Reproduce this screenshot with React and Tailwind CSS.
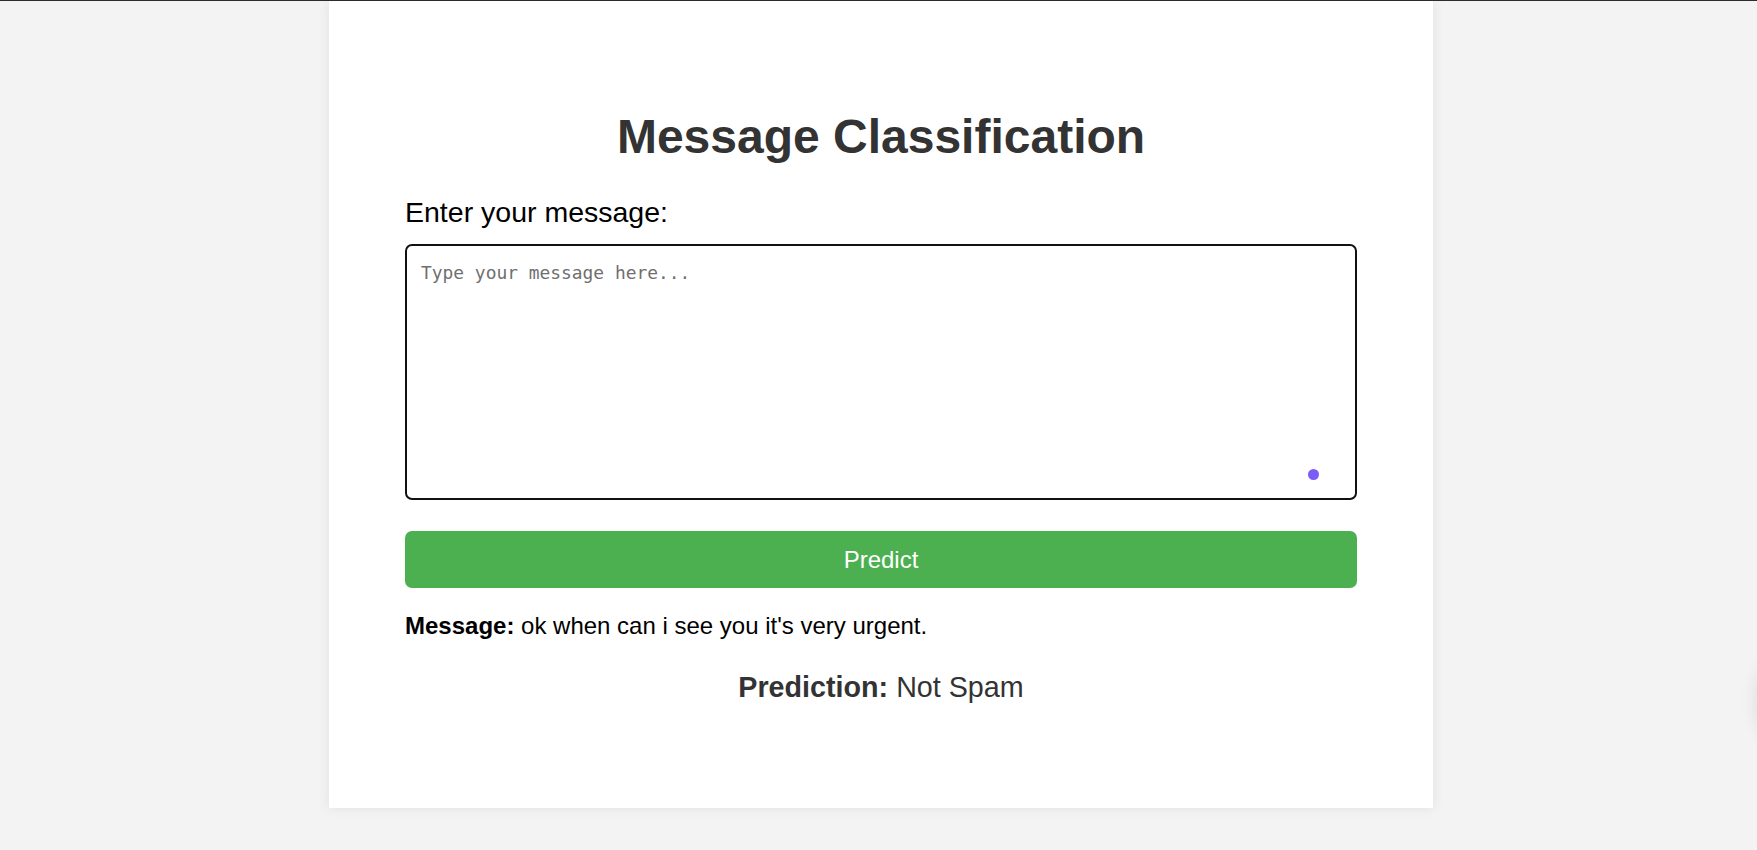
import React, { useState } from "react";

const SANS = "font-['Liberation_Sans',Arial,sans-serif]";

// Single card page: a text box, a predict button and the last result.
export default function App() {
  const [text, setText] = useState("");
  const result = {
    message: "ok when can i see you it's very urgent.",
    label: "Not Spam",
  };

  return (
    <div className={`relative min-h-[850px] overflow-hidden border-t border-[#2b2b2b] bg-[#f3f3f3] pl-[5px] ${SANS}`}>
      <div className="mx-auto w-[1104px] bg-white px-[76px] pt-[108px] pb-[104px] shadow-[0_0_12px_rgba(0,0,0,0.08)]">
        <h1 className="text-center text-[48px] leading-[56px] font-bold text-[#333]">
          Message Classification
        </h1>

        <label htmlFor="msg" className="mt-[31px] block text-[28.5px] leading-[32px] text-black">
          Enter your message:
        </label>

        <div className="relative mt-[16px]">
          <textarea
            id="msg"
            autoFocus
            value={text}
            onChange={(e) => setText(e.target.value)}
            placeholder="Type your message here..."
            className="block h-[256px] w-full resize-none rounded-[7px] border-2 border-[#111] px-[14px] py-[15px] font-['DejaVu_Sans_Mono',monospace] text-[17.9px] leading-[23px] text-black outline-none placeholder:text-[#6f6f6f]"
          />
          {/* extension badge sitting in the corner of the text box */}
          <span className="absolute right-[38px] bottom-[20px] h-[11px] w-[11px] rounded-full bg-[#7b5cf6]" />
        </div>

        <button className="mt-[31px] flex h-[57px] w-full items-center justify-center rounded-[7px] bg-[#4caf50] text-[24px] text-white">
          Predict
        </button>

        <p className="mt-[24px] text-[24px] leading-[28px] text-black">
          <span className="font-bold">Message:</span> {result.message}
        </p>

        <p className="mt-[30px] text-center text-[28.7px] leading-[34px] text-[#333]">
          <span className="font-bold">Prediction:</span> {result.label}
        </p>
      </div>

      {/* floating widget peeking in from the right edge, only its shadow shows */}
      <div className="absolute top-[660px] right-[-60px] h-[80px] w-[60px] rounded-full bg-[#f3f3f3] shadow-[0_0_18px_rgba(0,0,0,0.10)]" />
    </div>
  );
}
